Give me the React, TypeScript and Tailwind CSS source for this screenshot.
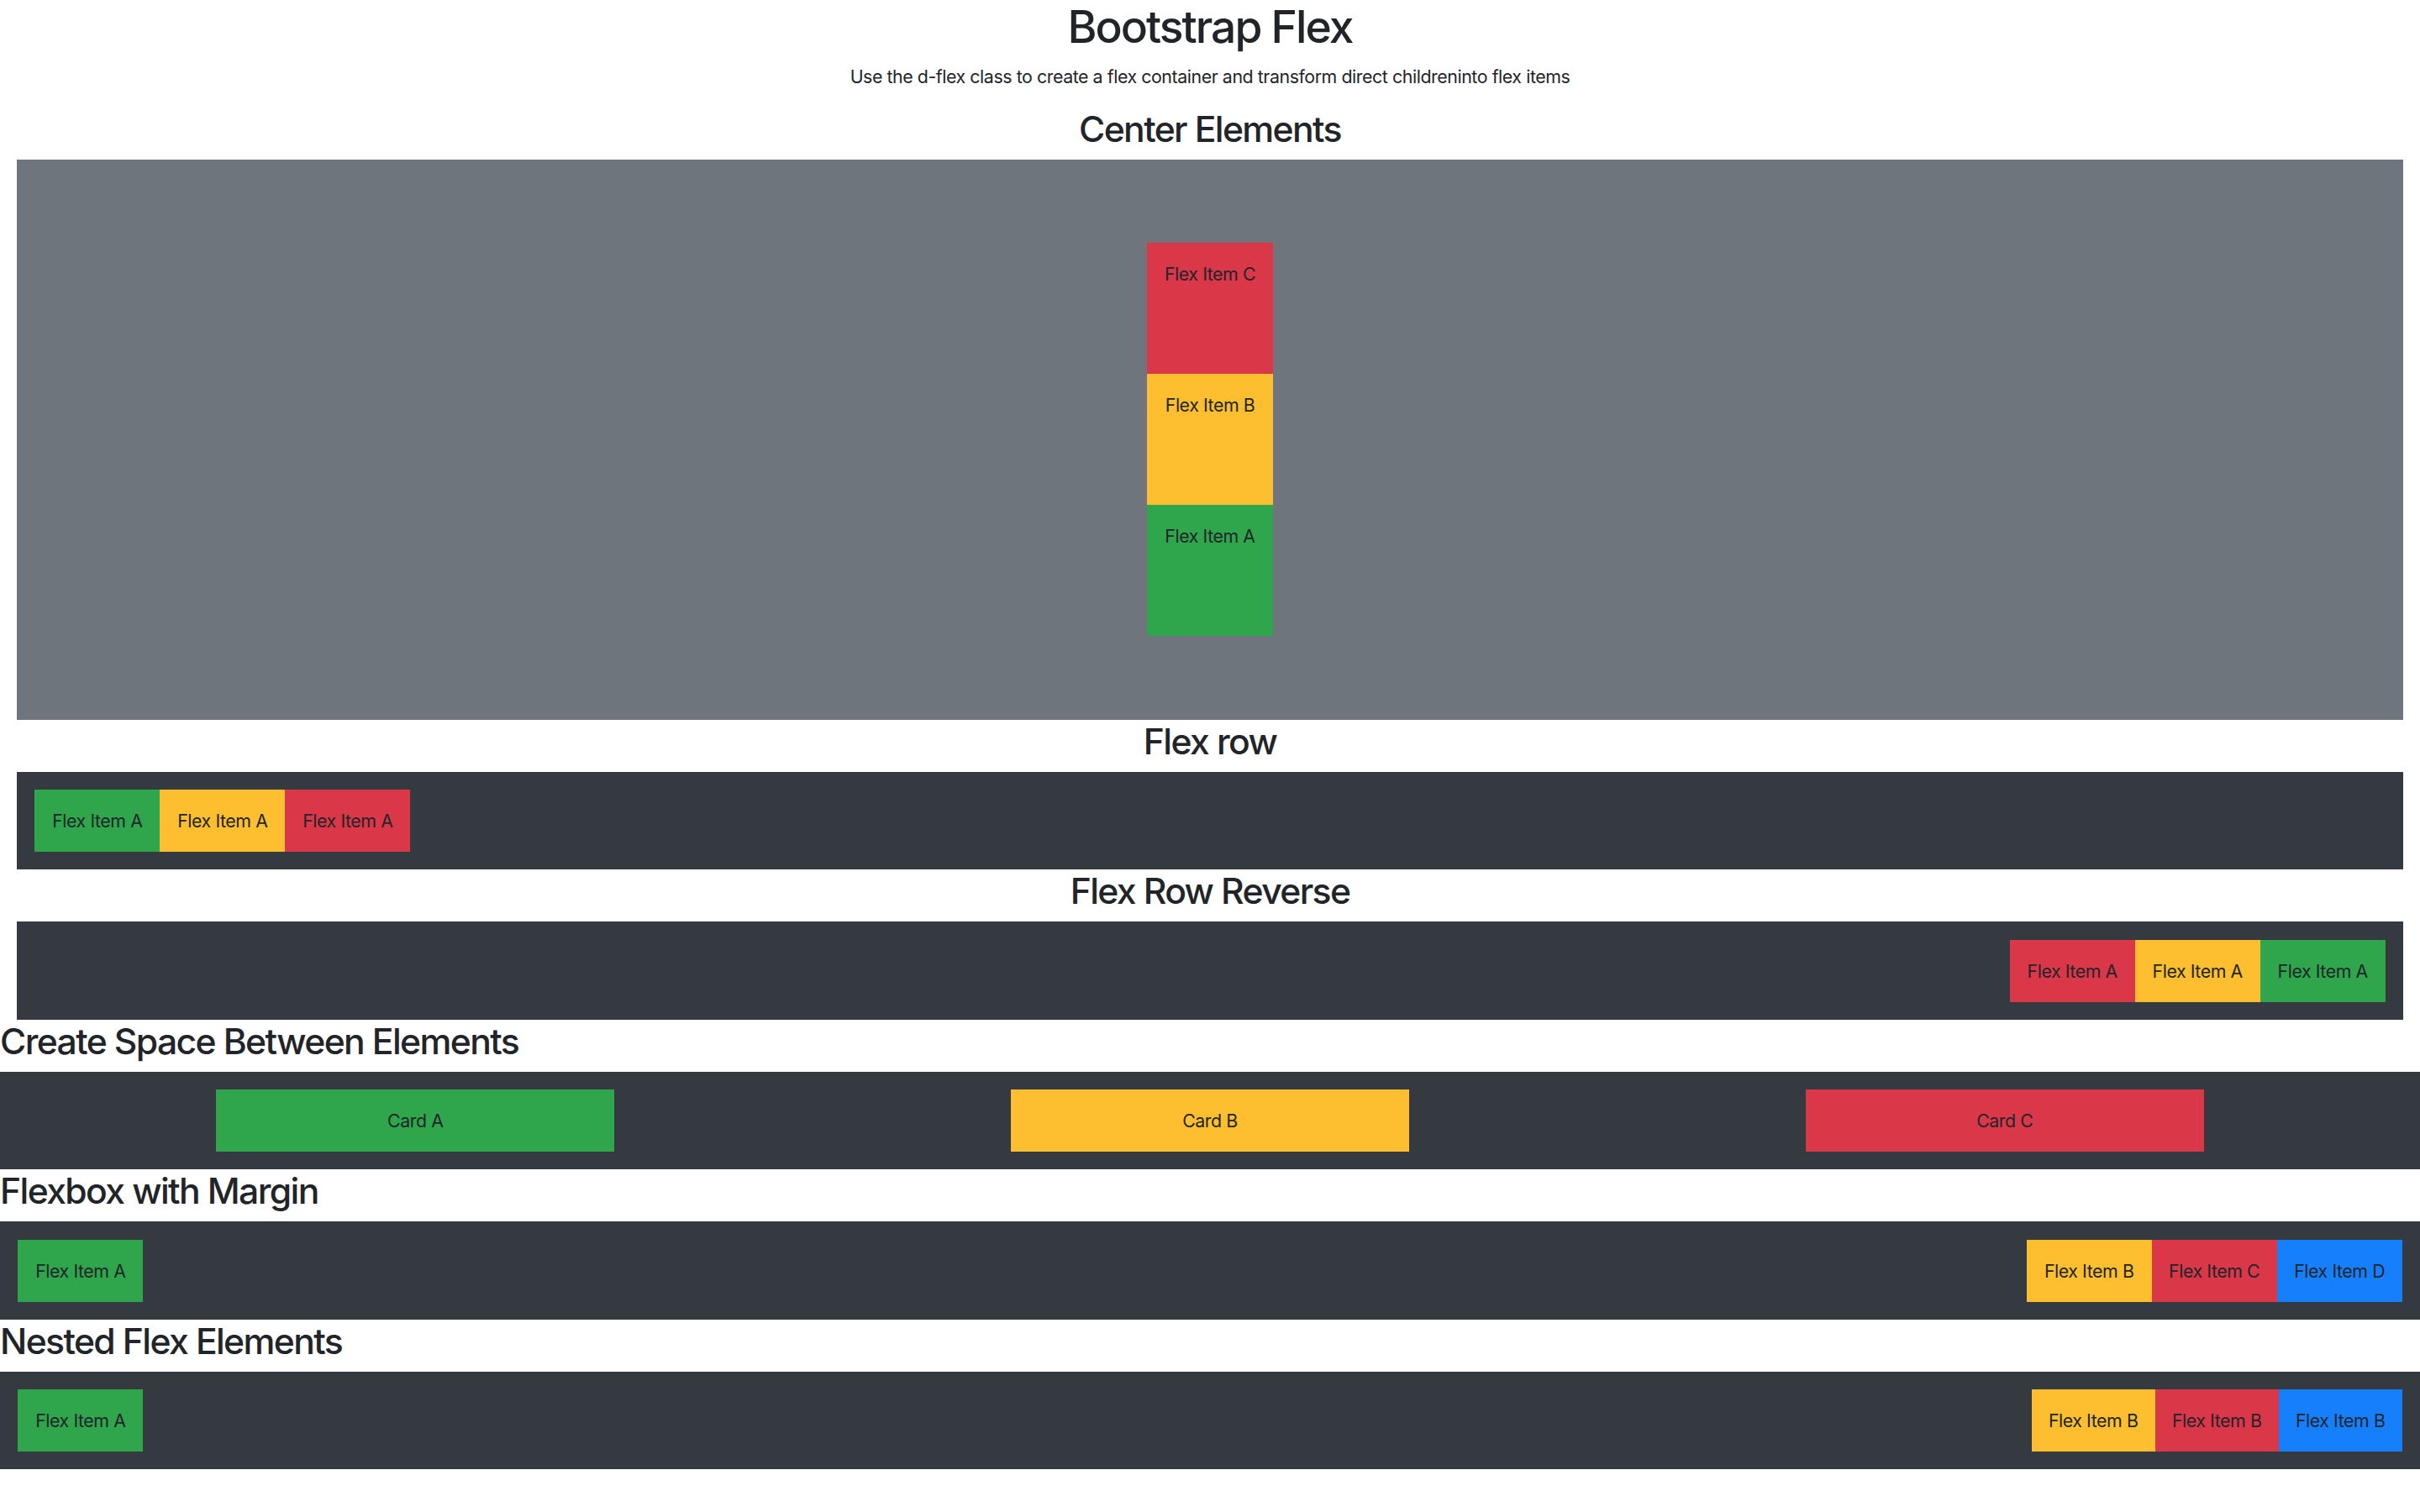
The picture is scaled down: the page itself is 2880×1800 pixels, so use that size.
import React from "react";

const Item: React.FC<{ color: string; children: React.ReactNode }> = ({ color, children }) => (
  <div className={`${color} w-[149px] py-[21px] text-center leading-[32px] whitespace-nowrap`}>{children}</div>
);

const App: React.FC = () => {
  return (
    <div className="bg-white min-h-screen font-['Inter','Liberation_Sans',sans-serif] text-[#212529] text-[21.33px] leading-[32px] tracking-[-0.02em]">
      <div className="px-[20px]">
        <h1 className="text-center text-[53.33px] leading-[64px] font-medium tracking-[-0.037em] mb-[10.67px]">Bootstrap Flex</h1>
        <p className="text-center mb-[21.33px]">
          Use the d-flex class to create a flex container and transform direct childreninto flex items
        </p>

        <h2 className="text-center text-[42.67px] leading-[51.2px] font-medium tracking-[-0.038em] mb-[10.67px]">Center Elements</h2>
        <div className="bg-[#6e757c] h-[667px] flex flex-col-reverse justify-center items-center">
          <div className="bg-[#2fa54c] w-[150px] h-[156px] py-[21px] text-center whitespace-nowrap">Flex Item A</div>
          <div className="bg-[#fdbe2f] w-[150px] h-[156px] py-[21px] text-center whitespace-nowrap">Flex Item B</div>
          <div className="bg-[#da3749] w-[150px] h-[156px] py-[21px] text-center whitespace-nowrap">Flex Item C</div>
        </div>

        <h2 className="text-center text-[42.67px] leading-[51.2px] font-medium tracking-[-0.038em] mb-[10.67px]">Flex row</h2>
        <div className="bg-[#353940] flex p-[21.33px]">
          <Item color="bg-[#2fa54c]">Flex Item A</Item>
          <Item color="bg-[#fdbe2f]">Flex Item A</Item>
          <Item color="bg-[#da3749]">Flex Item A</Item>
        </div>

        <h2 className="text-center text-[42.67px] leading-[51.2px] font-medium tracking-[-0.038em] mb-[10.67px]">Flex Row Reverse</h2>
        <div className="bg-[#353940] flex flex-row-reverse p-[21.33px]">
          <Item color="bg-[#2fa54c]">Flex Item A</Item>
          <Item color="bg-[#fdbe2f]">Flex Item A</Item>
          <Item color="bg-[#da3749]">Flex Item A</Item>
        </div>
      </div>

      <h2 className="text-[42.67px] leading-[51.2px] font-medium tracking-[-0.038em] mb-[10.67px]">Create Space Between Elements</h2>
      <div className="bg-[#353940] flex justify-around p-[21.33px]">
        <div className="bg-[#2fa54c] w-[474px] py-[21px] text-center">Card A</div>
        <div className="bg-[#fdbe2f] w-[474px] py-[21px] text-center">Card B</div>
        <div className="bg-[#da3749] w-[474px] py-[21px] text-center">Card C</div>
      </div>

      <h2 className="text-[42.67px] leading-[51.2px] font-medium tracking-[-0.038em] mb-[10.67px]">Flexbox with Margin</h2>
      <div className="bg-[#353940] flex p-[21.33px]">
        <div className="mr-auto">
          <Item color="bg-[#2fa54c]">Flex Item A</Item>
        </div>
        <Item color="bg-[#fdbe2f]">Flex Item B</Item>
        <Item color="bg-[#da3749]">Flex Item C</Item>
        <Item color="bg-[#167ffb]">Flex Item D</Item>
      </div>

      <h2 className="text-[42.67px] leading-[51.2px] font-medium tracking-[-0.038em] mb-[10.67px]">Nested Flex Elements</h2>
      <div className="bg-[#353940] flex justify-between p-[21.33px]">
        <Item color="bg-[#2fa54c]">Flex Item A</Item>
        <div className="flex">
          <div className="bg-[#fdbe2f] w-[147px] py-[21px] text-center whitespace-nowrap">Flex Item B</div>
          <div className="bg-[#da3749] w-[147px] py-[21px] text-center whitespace-nowrap">Flex Item B</div>
          <div className="bg-[#167ffb] w-[147px] py-[21px] text-center whitespace-nowrap">Flex Item B</div>
        </div>
      </div>
    </div>
  );
};

export default App;
